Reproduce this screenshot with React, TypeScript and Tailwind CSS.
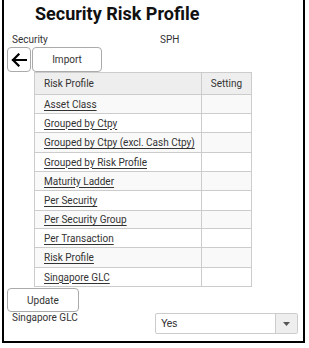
import React from "react";

const rows: { label: string; h: string; bg: string }[] = [
  { label: "Asset Class", h: "h-[19px]", bg: "bg-[#f9f9f9]" },
  { label: "Grouped by Ctpy", h: "h-[19px]", bg: "bg-white" },
  { label: "Grouped by Ctpy (excl. Cash Ctpy)", h: "h-[20px]", bg: "bg-[#f9f9f9]" },
  { label: "Grouped by Risk Profile", h: "h-[19px]", bg: "bg-white" },
  { label: "Maturity Ladder", h: "h-[19px]", bg: "bg-[#f9f9f9]" },
  { label: "Per Security", h: "h-[20px]", bg: "bg-white" },
  { label: "Per Security Group", h: "h-[18px]", bg: "bg-[#f9f9f9]" },
  { label: "Per Transaction", h: "h-[19px]", bg: "bg-white" },
  { label: "Risk Profile", h: "h-[20px]", bg: "bg-[#f9f9f9]" },
  { label: "Singapore GLC", h: "h-[18px]", bg: "bg-white" },
];

export default function App() {
  return (
    <div className="w-[309px] h-[348px] bg-white text-[#333] font-['Roboto',sans-serif]">
      <div className="ml-[2px] w-[303px] h-[343px] border-2 border-t-0 border-black flex flex-col">
        <h1 className="ml-[31px] pt-[3px] text-[18px] leading-[22px] font-bold text-[#111] font-['Roboto',sans-serif]">
          Security Risk Profile
        </h1>
        <div className="mt-[9px] flex h-[12px] text-[10px] leading-[12px]">
          <span className="ml-[8px] w-[148px]">Security</span>
          <span>SPH</span>
        </div>
        <div className="mt-[1px] flex h-[25px]">
          <button className="ml-[3px] w-[24px] h-[25px] border border-[#aaa] rounded-[4px] bg-white flex items-center justify-center">
            <svg width="16" height="14" viewBox="0 0 16 14" fill="none">
              <path d="M15 7H2M7.5 1.5L2 7l5.5 5.5" stroke="#000" strokeWidth="2.2" strokeLinecap="square" />
            </svg>
          </button>
          <button className="ml-[1px] w-[70px] h-[25px] border border-[#aaa] rounded-[4px] bg-white text-[10px] text-[#333]">
            Import
          </button>
        </div>
        <div className="ml-[30px] w-[218px] border border-t-0 border-[#ccc] text-[10px]">
          <div className="flex h-[23px] bg-[#eeeeee] border-t border-b border-[#ccc]">
            <div className="w-[167px] border-r border-[#ccc] flex items-center pl-[9px]">Risk Profile</div>
            <div className="flex-1 flex items-center justify-center">Setting</div>
          </div>
          {rows.map((r, i) => (
            <div
              key={i}
              className={`flex ${r.h} ${r.bg} ${i < rows.length - 1 ? "border-b border-[#ccc]" : ""}`}
            >
              <div className="w-[167px] border-r border-[#ccc] flex items-center pl-[9px]">
                <span className="underline underline-offset-[1.5px]">{r.label}</span>
              </div>
              <div className="flex-1" />
            </div>
          ))}
        </div>
        <button className="mt-[1px] ml-[3px] w-[72px] h-[24px] border border-[#aaa] rounded-[4px] bg-white text-[10px] text-[#333]">
          Update
        </button>
        <div className="flex items-start">
          <span className="ml-[8px] text-[10px] leading-[12px]">Singapore GLC</span>
          <div className="ml-auto mr-[5px] mt-[1px] w-[143px] h-[21px] border border-[#ccc] rounded-[2px] flex bg-white">
            <span className="flex-1 pl-[5px] text-[10px] leading-[19px] font-['Liberation_Sans',sans-serif] text-[#222]">
              Yes
            </span>
            <div className="w-[22px] bg-[#eeeeee] border-l border-[#ccc] flex items-center justify-center">
              <svg width="7" height="4" viewBox="0 0 7 4">
                <path d="M0 0h7L3.5 4z" fill="#555" />
              </svg>
            </div>
          </div>
        </div>
      </div>
    </div>
  );
}
